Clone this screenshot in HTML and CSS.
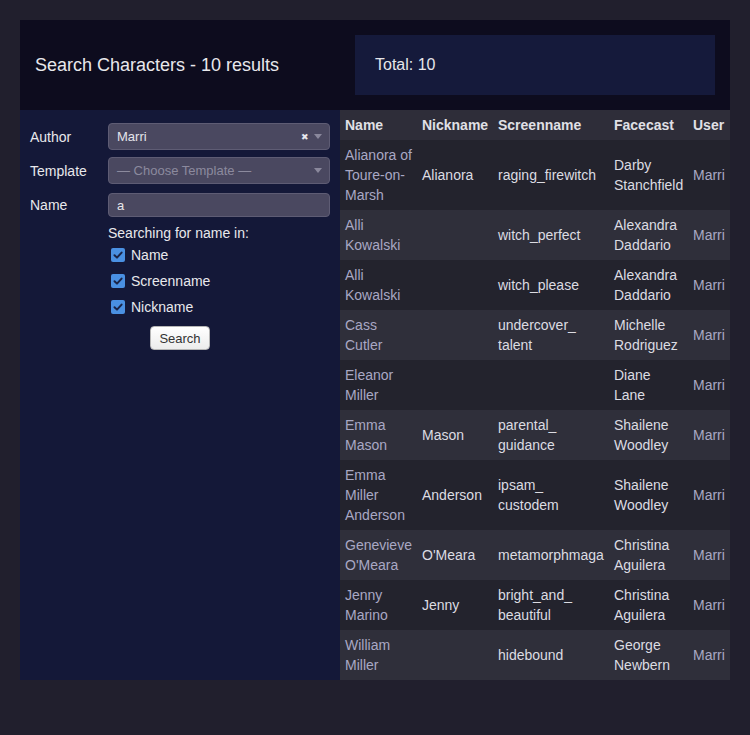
FILE: index.html
```html
<!DOCTYPE html>
<html>
<head>
<meta charset="utf-8">
<link rel="stylesheet" href="styles.css">
</head>
<body>
<div class="app">
  <header class="top">
    <div class="title">Search Characters - 10 results</div>
    <div class="total">Total: 10</div>
  </header>
  <div class="main">
    <aside class="panel">
      <div class="row r1">
        <label class="lbl">Author</label>
        <div class="select">
          <span class="val">Marri</span>
          <span class="clear">&#x2716;</span>
          <span class="arrow"></span>
        </div>
      </div>
      <div class="row r2">
        <label class="lbl">Template</label>
        <div class="select">
          <span class="ph">— Choose Template —</span>
          <span class="arrow"></span>
        </div>
      </div>
      <div class="row r3">
        <label class="lbl">Name</label>
        <div class="input">a</div>
      </div>
      <div class="searchin">
        <div class="hint">Searching for name in:</div>
        <div class="check"><span class="box"><svg viewBox="0 0 14 14" width="14" height="14"><path d="M3.5 7.2 L6 9.6 L10.6 4.6" fill="none" stroke="#1b2447" stroke-width="2" stroke-linecap="round" stroke-linejoin="round"/></svg></span>Name</div>
        <div class="check"><span class="box"><svg viewBox="0 0 14 14" width="14" height="14"><path d="M3.5 7.2 L6 9.6 L10.6 4.6" fill="none" stroke="#1b2447" stroke-width="2" stroke-linecap="round" stroke-linejoin="round"/></svg></span>Screenname</div>
        <div class="check"><span class="box"><svg viewBox="0 0 14 14" width="14" height="14"><path d="M3.5 7.2 L6 9.6 L10.6 4.6" fill="none" stroke="#1b2447" stroke-width="2" stroke-linecap="round" stroke-linejoin="round"/></svg></span>Nickname</div>
      </div>
      <div class="btnrow"><button class="btn">Search</button></div>
    </aside>
    <section class="results">
      <table>
        <colgroup>
          <col class="c1"><col class="c2"><col class="c3"><col class="c4"><col class="c5">
        </colgroup>
        <thead>
          <tr><th>Name</th><th>Nickname</th><th>Screenname</th><th>Facecast</th><th>User</th></tr>
        </thead>
        <tbody>
          <tr><td class="lnk">Alianora of Toure-on-Marsh</td><td>Alianora</td><td>raging_firewitch</td><td>Darby Stanchfield</td><td class="lnk">Marri</td></tr>
          <tr><td class="lnk">Alli Kowalski</td><td></td><td>witch_perfect</td><td>Alexandra Daddario</td><td class="lnk">Marri</td></tr>
          <tr><td class="lnk">Alli Kowalski</td><td></td><td>witch_please</td><td>Alexandra Daddario</td><td class="lnk">Marri</td></tr>
          <tr><td class="lnk">Cass Cutler</td><td></td><td>undercover_<br>talent</td><td>Michelle Rodriguez</td><td class="lnk">Marri</td></tr>
          <tr><td class="lnk">Eleanor Miller</td><td></td><td></td><td>Diane Lane</td><td class="lnk">Marri</td></tr>
          <tr><td class="lnk">Emma Mason</td><td>Mason</td><td>parental_<br>guidance</td><td>Shailene Woodley</td><td class="lnk">Marri</td></tr>
          <tr><td class="lnk">Emma Miller Anderson</td><td>Anderson</td><td>ipsam_<br>custodem</td><td>Shailene Woodley</td><td class="lnk">Marri</td></tr>
          <tr><td class="lnk">Genevieve O'Meara</td><td>O'Meara</td><td>metamorphmaga</td><td>Christina Aguilera</td><td class="lnk">Marri</td></tr>
          <tr><td class="lnk">Jenny Marino</td><td>Jenny</td><td>bright_and_<br>beautiful</td><td>Christina Aguilera</td><td class="lnk">Marri</td></tr>
          <tr><td class="lnk">William Miller</td><td></td><td>hidebound</td><td>George Newbern</td><td class="lnk">Marri</td></tr>
        </tbody>
      </table>
    </section>
  </div>
</div>
</body>
</html>
```

FILE: styles.css
```css
html, body {
  margin: 0;
  padding: 0;
}
body {
  background: #211f2d;
  font-family: "Liberation Sans", Arial, sans-serif;
  color: #e4e4e8;
  padding: 20px;
  height: 735px;
  box-sizing: border-box;
}
.app {
  width: 710px;
}
.top {
  height: 90px;
  background: #0d0c1e;
  display: grid;
  grid-template-columns: 335px 1fr;
  align-items: center;
}
.title {
  padding-left: 15px;
  font-size: 18px;
  color: #e8e8ec;
}
.total {
  margin: 0 15px 0 0;
  height: 60px;
  background: #151a3b;
  display: flex;
  align-items: center;
  padding-left: 20px;
  font-size: 16px;
  color: #e6e6ea;
}
.main {
  display: flex;
}
.panel {
  width: 320px;
  flex: none;
  background: #141838;
  padding: 13px 10px 10px 10px;
  box-sizing: border-box;
  font-size: 14px;
}
.row {
  display: grid;
  grid-template-columns: 78px 222px;
  align-items: center;
}
.r1 { margin-bottom: 7px; }
.r2 { margin-bottom: 9px; }
.lbl {
  color: #e8e8ec;
  font-size: 14px;
}
.select, .input {
  box-sizing: border-box;
  background: #4a4860;
  border: 1px solid #5e5c74;
  border-radius: 4px;
  display: flex;
  align-items: center;
  padding: 0 8px;
  font-size: 13px;
}
.select {
  height: 27px;
}
.input {
  height: 24px;
  color: #e6e6ea;
}
.val {
  color: #e4e4ea;
  flex: 1;
}
.ph {
  color: #8c8a9e;
  flex: 1;
}
.clear {
  font-size: 9px;
  color: #e8e8ee;
  margin-right: 5px;
}
.arrow {
  width: 0;
  height: 0;
  border-left: 4.5px solid transparent;
  border-right: 4.5px solid transparent;
  border-top: 5px solid #8a889c;
  margin-right: -1px;
}
.searchin {
  margin-left: 78px;
  margin-top: 7px;
}
.hint {
  line-height: 18px;
  color: #e8e8ec;
}
.check {
  height: 26px;
  display: flex;
  align-items: center;
  padding-left: 3px;
  color: #e8e8ec;
}
.box {
  width: 14px;
  height: 14px;
  background: #4a90e2;
  border-radius: 2px;
  margin-right: 6px;
  display: flex;
}
.btnrow {
  display: flex;
  justify-content: center;
  margin-top: 6px;
}
.btn {
  width: 60px;
  height: 24px;
  background: linear-gradient(#ffffff, #ececec);
  border: 1px solid #b5b5b5;
  border-radius: 4px;
  font-family: "Liberation Sans", Arial, sans-serif;
  font-size: 13px;
  color: #333;
  padding: 0;
}
.results {
  flex: 1;
}
table {
  width: 390px;
  border-collapse: collapse;
  table-layout: fixed;
  font-size: 14px;
}
.c1 { width: 77px; }
.c2 { width: 76px; }
.c3 { width: 116px; }
.c4 { width: 79px; }
.c5 { width: 42px; }
th, td {
  padding: 5px;
  line-height: 20px;
  text-align: left;
  vertical-align: middle;
}
th {
  background: #2e2d39;
  color: #e0e0e6;
  font-weight: bold;
  white-space: nowrap;
  overflow: hidden;
}
td {
  color: #dcdce2;
}
tbody tr:nth-child(odd) { background: #23232d; }
tbody tr:nth-child(even) { background: #2f2f3a; }
td.lnk {
  color: #a9a8c4;
}
```
